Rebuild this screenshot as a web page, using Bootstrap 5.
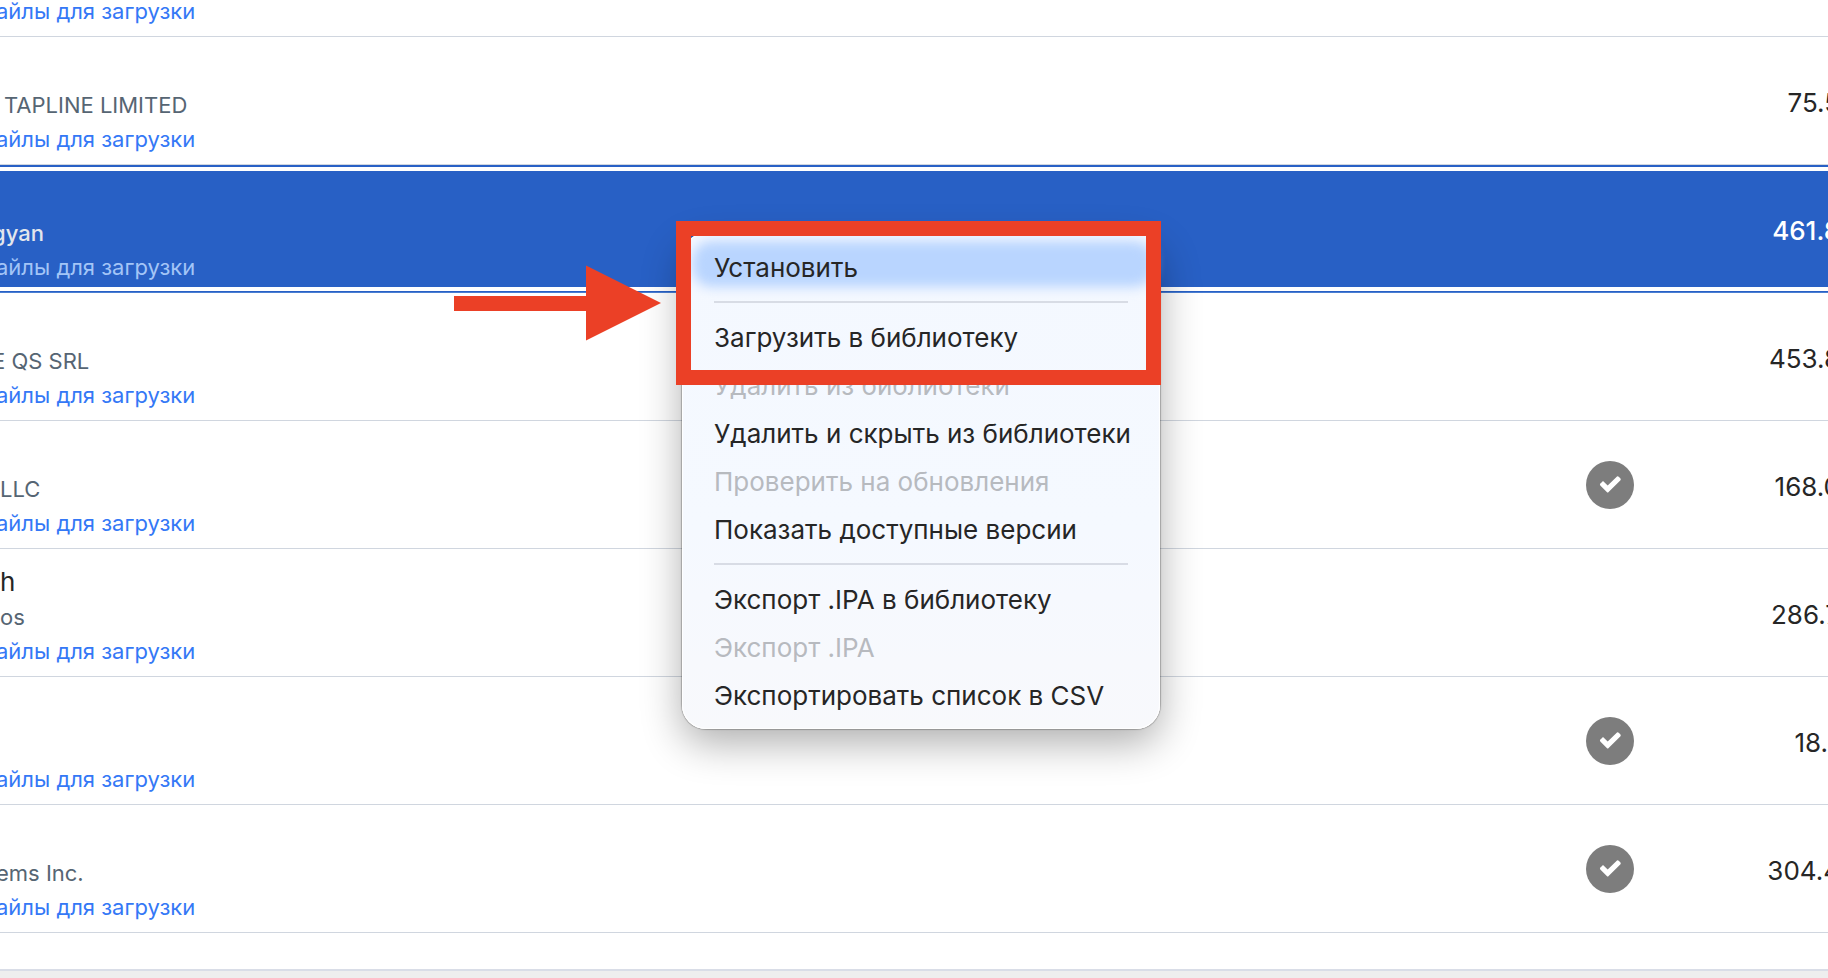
<!DOCTYPE html>
<html lang="ru">
<head>
<meta charset="utf-8">
<meta name="viewport" content="width=device-width, initial-scale=1">
<title>Библиотека приложений</title>
<link rel="stylesheet" href="https://cdn.jsdelivr.net/npm/bootstrap@5.3.0/dist/css/bootstrap.min.css">
<style>
  body { font-family: Inter, "Liberation Sans", sans-serif; font-size: 26px; color: #262626; background: #fff; }
  .app-scroll { min-height: 0; }
  /* the list is scrolled down by part of its first row */
  .app-table { table-layout: fixed; border-collapse: separate; border-spacing: 0; margin-top: -91px; line-height: 34px; }
  .app-table td { height: 128px; padding: 0; border-bottom: 1px solid #d0d6df; vertical-align: middle; white-space: nowrap; }
  .col-status { width: 196px; }
  .col-size { width: 120px; }
  .app-info { height: 127px; padding-top: 16px; }
  .app-name { height: 35px; }
  .app-vendor { height: 34px; font-size: 22px; color: #566573; }
  .app-files { display: block; height: 34px; font-size: 22px; color: #3478f6; text-decoration: none; }
  .cut { margin-left: -4px; }
  .cut-more { margin-left: -8px; }
  .app-size { margin-right: -12px; text-align: right; padding-top: 4px; }
  .app-size-short { margin-right: 0; }
  .app-table tr.selected td {
    background: #2860c5; color: #fff; border-bottom-color: #4a7ed2;
    box-shadow: inset 0 2px #2860c5, inset 0 6px #fff, inset 0 -1px #2860c5, inset 0 -5px #fff;
  }
  .selected .app-vendor { color: #e3e6ec; font-weight: 500; }
  .selected .app-files { color: #a3c5f7; }
  .selected .app-size { font-weight: 500; }
  .status-bar { height: 9px; border-top: 2px solid #d9dde7; background: #eee; }

  .context-menu {
    top: 233px; left: 682px; width: 478px; padding: 10px 32px; border-radius: 24px;
    background: linear-gradient(#f4f8ff, #f5f9ff 60%, #f8f9fc);
    border: 0; box-shadow: 0 0 1px 1px rgba(0,0,0,.24), inset 0 0 1px 1px #fff, 0 14px 40px rgba(0,0,0,.32);
  }
  .context-menu button {
    position: relative; display: block; width: 100%; height: 48px; padding: 0; border: 0; background: none;
    line-height: 50px; text-align: left; color: #262626; white-space: nowrap;
  }
  .context-menu button:disabled { color: #b7babf; }
  .context-menu .active::before {
    content: ""; position: absolute; z-index: -1; inset: -2px -26px 4px -22px;
    border-radius: 20px; background: #b9d5ff; filter: blur(6px);
  }
  .context-menu hr { height: 2px; margin: 10px 0; border: 0; background: #d8dce5; opacity: 1; }
  .mark-frame { top: 221px; left: 676px; width: 485px; height: 164px; border: 15px solid #eb4026; pointer-events: none; z-index: 3; }
  .mark-arrow { top: 265px; left: 454px; z-index: 3; }
</style>
</head>
<body>
<div class="vh-100 d-flex flex-column position-relative overflow-hidden">
  <main class="app-scroll flex-grow-1 overflow-hidden">
    <table class="app-table w-100">
      <colgroup><col><col class="col-status"><col class="col-size"></colgroup>
      <tbody>
        <tr>
          <td><div class="app-info"><div class="app-name"></div><div class="app-vendor"></div><a class="app-files cut" href="#">айлы для загрузки</a></div></td>
          <td></td><td></td>
        </tr>
        <tr>
          <td><div class="app-info"><div class="app-name"></div><div class="app-vendor ps-1">TAPLINE LIMITED</div><a class="app-files cut" href="#">айлы для загрузки</a></div></td>
          <td></td><td><div class="app-size">75.5</div></td>
        </tr>
        <tr class="selected">
          <td><div class="app-info"><div class="app-name"></div><div class="app-vendor cut-more">gyan</div><a class="app-files cut" href="#">айлы для загрузки</a></div></td>
          <td></td><td><div class="app-size">461.8</div></td>
        </tr>
        <tr>
          <td><div class="app-info"><div class="app-name"></div><div class="app-vendor cut-more">E QS SRL</div><a class="app-files cut" href="#">айлы для загрузки</a></div></td>
          <td></td><td><div class="app-size">453.8</div></td>
        </tr>
        <tr>
          <td><div class="app-info"><div class="app-name"></div><div class="app-vendor">LLC</div><a class="app-files cut" href="#">айлы для загрузки</a></div></td>
          <td><svg class="d-block mx-auto" width="48" height="48" role="img" aria-label="Загружено"><use href="#check"/></svg></td>
          <td><div class="app-size">168.0</div></td>
        </tr>
        <tr>
          <td><div class="app-info"><div class="app-name">h</div><div class="app-vendor">os</div><a class="app-files cut" href="#">айлы для загрузки</a></div></td>
          <td></td><td><div class="app-size">286.7</div></td>
        </tr>
        <tr>
          <td><div class="app-info"><div class="app-name"></div><div class="app-vendor"></div><a class="app-files cut" href="#">айлы для загрузки</a></div></td>
          <td><svg class="d-block mx-auto" width="48" height="48" role="img" aria-label="Загружено"><use href="#check"/></svg></td>
          <td><div class="app-size app-size-short">18.</div></td>
        </tr>
        <tr>
          <td><div class="app-info"><div class="app-name"></div><div class="app-vendor cut">ems Inc.</div><a class="app-files cut" href="#">айлы для загрузки</a></div></td>
          <td><svg class="d-block mx-auto" width="48" height="48" role="img" aria-label="Загружено"><use href="#check"/></svg></td>
          <td><div class="app-size">304.4</div></td>
        </tr>
      </tbody>
    </table>
  </main>
  <footer class="status-bar flex-shrink-0"></footer>

  <div class="context-menu position-absolute z-1" role="menu">
    <button type="button" class="active" role="menuitem">Установить</button>
    <hr>
    <button type="button" role="menuitem">Загрузить в библиотеку</button>
    <button type="button" role="menuitem" disabled>Удалить из библиотеки</button>
    <button type="button" role="menuitem">Удалить и скрыть из библиотеки</button>
    <button type="button" role="menuitem" disabled>Проверить на обновления</button>
    <button type="button" role="menuitem">Показать доступные версии</button>
    <hr>
    <button type="button" role="menuitem">Экспорт .IPA в библиотеку</button>
    <button type="button" role="menuitem" disabled>Экспорт .IPA</button>
    <button type="button" role="menuitem">Экспортировать список в CSV</button>
  </div>
  <div class="mark-frame position-absolute"></div>
  <svg class="mark-arrow position-absolute" width="208" height="76" viewBox="0 0 208 76" aria-hidden="true">
    <path d="M0 31H132V.5L207 38 132 75.5V46H0Z" fill="#eb4026"/>
  </svg>
</div>

<svg class="d-none" aria-hidden="true">
  <symbol id="check" viewBox="0 0 48 48">
    <circle cx="24" cy="24" r="24" fill="#7d7d7d"/>
    <path d="M15 22L17 20L21.700 24.600L31 15.400Q32 15 33 16L34.500 17.500Q35 18.500 34.500 19.200L22.600 31Q21.700 32 20.800 31L14.300 24.500Q13.500 23.500 14.300 22.500Z" fill="#fff"/>
  </symbol>
</svg>
<script src="https://cdn.jsdelivr.net/npm/bootstrap@5.3.0/dist/js/bootstrap.bundle.min.js"></script>
</body>
</html>
